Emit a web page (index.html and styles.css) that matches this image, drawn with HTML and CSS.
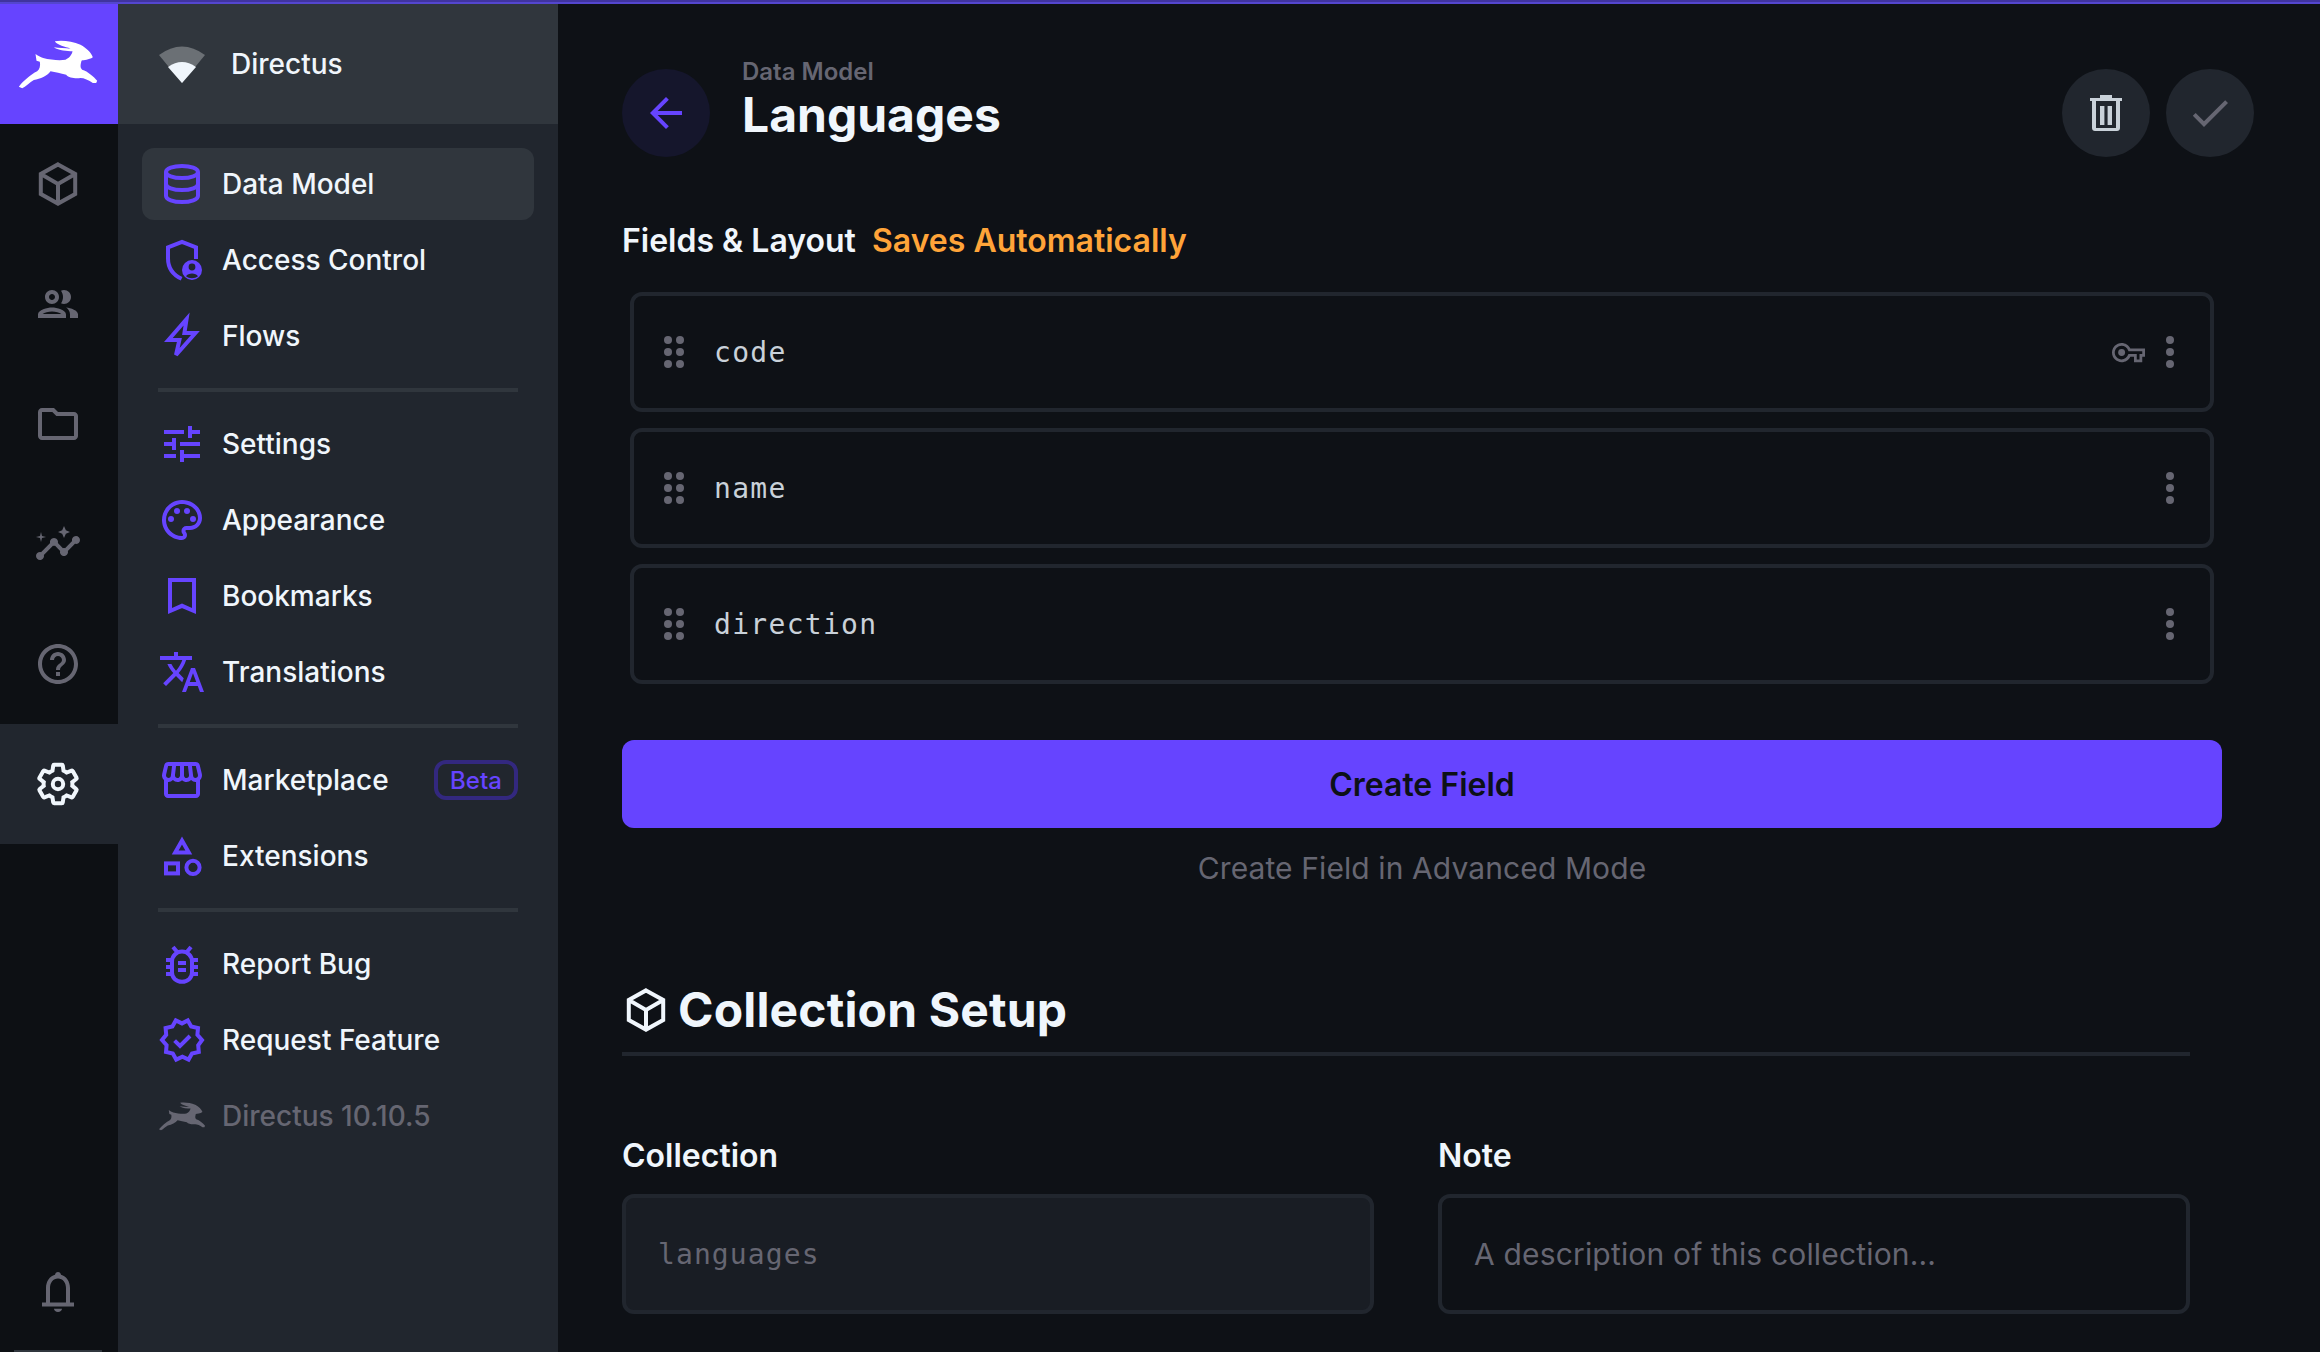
FILE: index.html
```html
<!DOCTYPE html>
<html lang="en">
<head>
    <meta charset="UTF-8">
    <title>Languages | Directus</title>
    <link rel="stylesheet" href="styles.css">
</head>
<body>
    <svg class="sprite" xmlns="http://www.w3.org/2000/svg">
        <symbol id="i-hare" viewBox="50 115 245 150"><path d="M55 258C70 240 90 222 110 212C118 205 120 195 118 183L108 180L105 160C112 165 120 170 128 172C150 178 180 180 195 177C208 172 215 160 216 152C200 152 175 150 160 140C175 142 195 143 210 144C195 138 170 134 163 122C185 118 215 122 240 132C258 142 272 155 277 170C265 178 250 178 243 180C240 192 238 200 245 207C262 212 280 228 290 240L287 247L277 247C265 238 250 232 240 232C225 234 205 232 197 222C180 218 165 215 150 212C140 226 120 235 100 238C88 245 75 258 65 263Z"/></symbol>
        <symbol id="i-box" viewBox="0 0 24 24"><path class="line" d="M12 2.2 20.6 7v10L12 21.8 3.4 17V7zM3.4 7 12 12l8.6-5M12 12v9.8"/></symbol>
        <symbol id="i-people" viewBox="0 0 24 24"><path d="M9 13.75c-2.34 0-7 1.17-7 3.5V19h14v-1.75c0-2.33-4.66-3.5-7-3.5zM4.34 17c.84-.58 2.87-1.25 4.66-1.25s3.82.67 4.66 1.25H4.34zM9 12c1.93 0 3.5-1.57 3.5-3.5S10.93 5 9 5 5.5 6.57 5.5 8.5 7.07 12 9 12zm0-5c.83 0 1.5.67 1.5 1.5S9.83 10 9 10s-1.5-.67-1.5-1.5S8.17 7 9 7zm7.04 6.81c1.16.84 1.96 1.96 1.96 3.44V19h4v-1.75c0-2.02-3.5-3.17-5.96-3.44zM15 12c1.93 0 3.5-1.57 3.5-3.5S16.93 5 15 5c-.54 0-1.04.13-1.5.35.63.89 1 1.98 1 3.15s-.37 2.26-1 3.15c.46.22.96.35 1.5.35z"/></symbol>
        <symbol id="i-folder" viewBox="0 0 24 24"><path d="M9.17 6l2 2H20v10H4V6h5.17M10 4H4c-1.1 0-1.99.9-1.99 2L2 18c0 1.1.9 2 2 2h16c1.1 0 2-.9 2-2V8c0-1.1-.9-2-2-2h-8l-2-2z"/></symbol>
        <symbol id="i-insights" viewBox="0 0 24 24"><path d="M21 8c-1.45 0-2.26 1.44-1.93 2.51l-3.55 3.56c-.3-.09-.74-.09-1.04 0l-2.55-2.55C12.27 10.45 11.46 9 10 9c-1.45 0-2.27 1.44-1.93 2.52l-4.56 4.55C2.44 15.74 1 16.55 1 18c0 1.1.9 2 2 2 1.45 0 2.26-1.44 1.93-2.51l4.55-4.56c.3.09.74.09 1.04 0l2.55 2.55C12.73 16.55 13.54 18 15 18c1.45 0 2.27-1.44 1.93-2.52l3.56-3.55c1.07.33 2.51-.48 2.51-1.93 0-1.1-.9-2-2-2z"/><path d="M15 9l.94-2.07L18 6l-2.06-.93L15 3l-.92 2.07L12 6l2.08.93zM3.5 11L4 9l2-.5L4 8l-.5-2L3 8l-2 .5L3 9z"/></symbol>
        <symbol id="i-help" viewBox="0 0 24 24"><path d="M11 18h2v-2h-2v2zm1-16C6.48 2 2 6.48 2 12s4.48 10 10 10 10-4.48 10-10S17.52 2 12 2zm0 18c-4.41 0-8-3.59-8-8s3.59-8 8-8 8 3.59 8 8-3.59 8-8 8zm0-14c-2.21 0-4 1.79-4 4h2c0-1.1.9-2 2-2s2 .9 2 2c0 2-3 1.75-3 5h2c0-2.25 3-2.5 3-5 0-2.21-1.79-4-4-4z"/></symbol>
        <symbol id="i-gear" viewBox="0 0 24 24"><path class="line" d="M19.14 12.94c.04-.3.06-.61.06-.94 0-.32-.02-.64-.07-.94l2.03-1.58c.18-.14.23-.41.12-.61l-1.92-3.32c-.12-.22-.37-.29-.59-.22l-2.39.96c-.5-.38-1.03-.7-1.62-.94l-.36-2.54c-.04-.24-.24-.41-.48-.41h-3.84c-.24 0-.43.17-.47.41l-.36 2.54c-.59.24-1.13.57-1.62.94l-2.39-.96c-.22-.08-.47 0-.59.22L2.74 8.87c-.12.21-.08.47.12.61l2.03 1.58c-.05.3-.09.63-.09.94s.02.64.07.94l-2.03 1.58c-.18.14-.23.41-.12.61l1.92 3.32c.12.22.37.29.59.22l2.39-.96c.5.38 1.03.7 1.62.94l.36 2.54c.05.24.24.41.48.41h3.84c.24 0 .44-.17.47-.41l.36-2.54c.59-.24 1.13-.56 1.62-.94l2.39.96c.22.08.47 0 .59-.22l1.92-3.32c.12-.22.07-.47-.12-.61l-2.01-1.58z"/><circle class="line" cx="12" cy="12" r="2.6"/></symbol>
        <symbol id="i-bell" viewBox="0 0 24 24"><path d="M4 17.2h16v2H4zM10 20.4h4c0 1-.9 1.6-2 1.6s-2-.6-2-1.6zM12 2c.8 0 1.4.6 1.5 1.4C16.200 4.100 18 6.800 18 10v7.500h-2V10c0-2.700-1.600-4.800-4-4.800S8 7.300 8 10v7.500H6V10c0-3.200 1.800-5.900 4.500-6.600C10.600 2.600 11.200 2 12 2z"/></symbol>
        <symbol id="i-database" viewBox="0 0 24 24"><path class="line" d="M4 6c0-1.700 3.600-3 8-3s8 1.300 8 3-3.600 3-8 3-8-1.300-8-3zM4 6v12c0 1.700 3.600 3 8 3s8-1.300 8-3V6M4 12c0 1.700 3.600 3 8 3s8-1.300 8-3"/></symbol>
        <symbol id="i-shield" viewBox="0 0 24 24"><path class="line" d="M19 11.500V5.700L12 3 5 5.700v5.500c0 4.500 2.600 8.200 6.800 10.200"/><path fill-rule="evenodd" d="M17 12a5 5 0 1 1 0 10 5 5 0 0 1 0-10zm0 1.800a1.700 1.700 0 1 0 0 3.400 1.700 1.700 0 0 0 0-3.400zm-3 6.300c.7.600 1.800 1 3 1s2.300-.4 3-1c-.6-.8-1.700-1.300-3-1.300s-2.400.5-3 1.300z"/></symbol>
        <symbol id="i-bolt" viewBox="0 0 24 24"><path class="line" d="M14.300 3.500 5.200 14h5.500L9 21.500 18.700 10.500H13.200z"/></symbol>
        <symbol id="i-tune" viewBox="0 0 24 24"><path d="M3 17v2h6v-2H3zM3 5v2h10V5H3zm10 16v-2h8v-2h-8v-2h-2v6h2zM7 9v2H3v2h4v2h2V9H7zm14 4v-2H11v2h10zm-6-4h2V7h4V5h-4V3h-2v6z"/></symbol>
        <symbol id="i-palette" viewBox="0 0 24 24"><path d="M12 22C6.490 22 2 17.510 2 12S6.490 2 12 2s10 4.040 10 9c0 3.310-2.690 6-6 6h-1.770c-.28 0-.5.220-.5.500 0 .120.050.230.130.330.410.470.640 1.060.640 1.670A2.500 2.500 0 0 1 12 22zm0-18c-4.410 0-8 3.590-8 8s3.590 8 8 8c.280 0 .500-.220.500-.500a.540.540 0 0 0-.140-.350c-.410-.460-.630-1.050-.630-1.650a2.500 2.500 0 0 1 2.500-2.500H16c2.210 0 4-1.790 4-4 0-3.860-3.590-7-8-7z"/><circle cx="6.500" cy="11.500" r="1.500"/><circle cx="9.500" cy="7.500" r="1.500"/><circle cx="14.500" cy="7.500" r="1.500"/><circle cx="17.500" cy="11.500" r="1.500"/></symbol>
        <symbol id="i-bookmark" viewBox="0 0 24 24"><path class="line" d="M6 4h12v15.500l-6-2.600-6 2.600z"/></symbol>
        <symbol id="i-translate" viewBox="0 0 24 24"><path d="M12.870 15.070l-2.540-2.510.030-.030c1.740-1.940 2.980-4.170 3.710-6.530H17V4h-7V2H8v2H1v1.990h11.170C11.500 7.920 10.440 9.750 9 11.350 8.070 10.320 7.300 9.190 6.690 8h-2c.73 1.630 1.730 3.170 2.980 4.560l-5.090 5.020L4 19l5-5 3.110 3.110.76-2.040zM18.500 10h-2L12 22h2l1.120-3h4.750L21 22h2l-4.500-12zm-2.620 7l1.620-4.330L19.120 17h-3.240z"/></symbol>
        <symbol id="i-store" viewBox="0 0 24 24"><path d="M21.900 8.890l-1.050-4.370c-.22-.9-1-1.520-1.910-1.520H5.050c-.9 0-1.690.63-1.900 1.520L2.100 8.890c-.24 1.020-.02 2.060.62 2.880.08.110.19.190.28.290V19c0 1.100.9 2 2 2h14c1.100 0 2-.9 2-2v-6.940c.09-.09.2-.18.28-.28.64-.82.87-1.870.62-2.890zm-2.990-3.900l1.050 4.370c.1.420.01.840-.25 1.170-.14.180-.44.470-.94.470-.61 0-1.140-.49-1.210-1.140L16.980 5l1.930-.01zM13 5h1.960l.54 4.520c.05.39-.07.78-.33 1.070-.22.26-.54.41-.95.41-.67 0-1.220-.59-1.220-1.310V5zM8.490 9.520L9.040 5H11v4.690c0 .72-.55 1.310-1.290 1.310-.34 0-.65-.15-.89-.41-.25-.29-.37-.68-.33-1.070zm-4.450-.16L5.050 5h1.970l-.58 4.860c-.08.65-.6 1.140-1.210 1.140-.49 0-.8-.29-.93-.47-.27-.32-.36-.75-.26-1.170zM5 19v-6.030c.08.010.15.030.23.030.87 0 1.660-.36 2.240-.95.6.6 1.400.95 2.310.95.87 0 1.650-.36 2.230-.93.59.57 1.390.93 2.290.93.84 0 1.640-.35 2.240-.95.58.59 1.370.95 2.240.95.08 0 .15-.02.23-.03V19H5z"/></symbol>
        <symbol id="i-shapes" viewBox="0 0 24 24"><path class="line" d="M12 4.300 15.400 10.200H8.600z"/><rect class="line" x="4" y="15.700" width="6" height="5"/><circle class="line" cx="17.500" cy="17.700" r="3.300"/></symbol>
        <symbol id="i-bug" viewBox="0 0 24 24"><path class="line" d="M12 5.800c2.800 0 5 2.200 5 5v5.400c0 2.800-2.200 4.700-5 4.700s-5-1.900-5-4.700v-5.400c0-2.800 2.200-5 5-5z"/><path class="line" d="M7.500 3.500 9.800 6.300M16.500 3.500 14.200 6.300M4 10h3M4 13.500h3M4 17h3M17 10h3M17 13.500h3M17 17h3M10 11.500h4M10 15h4"/></symbol>
        <symbol id="i-badge" viewBox="0 0 24 24"><path class="line" d="M22 12l-2.300-2.600.3-3.400-3.400-.8-1.700-3L12 3.700 8.900 2.200l-1.700 3-3.400.8.300 3.400L2 12l2.300 2.600-.3 3.400 3.400.8 1.700 3 3.100-1.500 3.100 1.500 1.700-3 3.400-.8-.3-3.400z"/><path class="line" d="M8.300 12.300l2.700 2.700 5-5"/></symbol>
        <symbol id="i-arrow" viewBox="0 0 24 24"><path d="M20 11H7.830l5.590-5.590L12 4l-8 8 8 8 1.410-1.410L7.830 13H20v-2z"/></symbol>
        <symbol id="i-trash" viewBox="0 0 24 24"><path d="M9 3h6v1.500h5V6H4V4.500h5zM5 6h2v13.500h10V6h2v13.500c0 .9-.6 1.500-1.500 1.500h-11C5.600 21 5 20.400 5 19.500zM9 8.500h2.200v9.500H9zM12.800 8.500H15v9.500h-2.200z"/></symbol>
        <symbol id="i-check" viewBox="0 0 24 24"><path d="M9 16.170 4.830 12l-1.420 1.410L9 19 21 7l-1.410-1.410z"/></symbol>
        <symbol id="i-key" viewBox="0 0 24 24"><path d="M22 19h-6v-4h-2.680c-1.140 2.420-3.620 4-6.320 4-3.860 0-7-3.140-7-7s3.140-7 7-7c2.700 0 5.170 1.580 6.320 4H24v6h-2v4zm-4-2h2v-4h2v-2H11.940l-.23-.67C11.010 8.340 9.110 7 7 7c-2.760 0-5 2.240-5 5s2.240 5 5 5c2.110 0 4.010-1.340 4.710-3.330l.23-.67H18v4z"/><circle cx="7" cy="12" r="2.500"/></symbol>
        <symbol id="i-drag" viewBox="0 0 24 32"><circle cx="6" cy="4" r="4"/><circle cx="18" cy="4" r="4"/><circle cx="6" cy="16" r="4"/><circle cx="18" cy="16" r="4"/><circle cx="6" cy="28" r="4"/><circle cx="18" cy="28" r="4"/></symbol>
        <symbol id="i-more" viewBox="0 0 8 32"><circle cx="4" cy="4" r="4"/><circle cx="4" cy="16" r="4"/><circle cx="4" cy="28" r="4"/></symbol>
    </svg>

    <div class="top-strip"></div>

    <div class="app">
        <aside class="modules">
            <a class="logo"><svg class="hare"><use href="#i-hare"/></svg></a>
            <a class="module"><svg class="icon"><use href="#i-box"/></svg></a>
            <a class="module"><svg class="icon"><use href="#i-people"/></svg></a>
            <a class="module"><svg class="icon"><use href="#i-folder"/></svg></a>
            <a class="module"><svg class="icon"><use href="#i-insights"/></svg></a>
            <a class="module"><svg class="icon"><use href="#i-help"/></svg></a>
            <a class="module active"><svg class="icon"><use href="#i-gear"/></svg></a>
            <a class="module bell"><svg class="icon"><use href="#i-bell"/></svg></a>
            <div class="avatar-edge"></div>
        </aside>

        <nav class="sidebar">
            <div class="project">
                <svg class="project-logo" viewBox="159 44 46 40">
                    <path class="arc" d="M159 55Q182 38 205 55L182 83Z"/>
                    <path class="fan" d="M168 67Q182 57 196 67L182 83Z"/>
                </svg>
                <span>Directus</span>
            </div>
            <div class="nav-list">
                <a class="nav-item active"><svg class="icon"><use href="#i-database"/></svg>Data Model</a>
                <a class="nav-item"><svg class="icon"><use href="#i-shield"/></svg>Access Control</a>
                <a class="nav-item"><svg class="icon"><use href="#i-bolt"/></svg>Flows</a>
                <div class="nav-divider"></div>
                <a class="nav-item"><svg class="icon"><use href="#i-tune"/></svg>Settings</a>
                <a class="nav-item"><svg class="icon"><use href="#i-palette"/></svg>Appearance</a>
                <a class="nav-item"><svg class="icon"><use href="#i-bookmark"/></svg>Bookmarks</a>
                <a class="nav-item"><svg class="icon"><use href="#i-translate"/></svg>Translations</a>
                <div class="nav-divider"></div>
                <a class="nav-item"><svg class="icon"><use href="#i-store"/></svg>Marketplace<span class="beta">Beta</span></a>
                <a class="nav-item"><svg class="icon"><use href="#i-shapes"/></svg>Extensions</a>
                <div class="nav-divider"></div>
                <a class="nav-item"><svg class="icon"><use href="#i-bug"/></svg>Report Bug</a>
                <a class="nav-item"><svg class="icon"><use href="#i-badge"/></svg>Request Feature</a>
                <a class="nav-item version"><svg class="hare-small"><use href="#i-hare"/></svg>Directus 10.10.5</a>
            </div>
        </nav>

        <main class="content">
            <header class="page-header">
                <a class="round-btn back"><svg class="icon"><use href="#i-arrow"/></svg></a>
                <div class="page-title">
                    <div class="crumb">Data Model</div>
                    <h1>Languages</h1>
                </div>
                <div class="actions">
                    <a class="round-btn trash"><svg class="icon"><use href="#i-trash"/></svg></a>
                    <a class="round-btn save"><svg class="icon"><use href="#i-check"/></svg></a>
                </div>
            </header>

            <div class="field-label first">Fields &amp; Layout <span class="warn">Saves Automatically</span></div>

            <div class="field-list">
                <div class="field-row">
                    <svg class="drag"><use href="#i-drag"/></svg>
                    <span class="field-name">code</span>
                    <svg class="key"><use href="#i-key"/></svg>
                    <svg class="more"><use href="#i-more"/></svg>
                </div>
                <div class="field-row">
                    <svg class="drag"><use href="#i-drag"/></svg>
                    <span class="field-name">name</span>
                    <svg class="more"><use href="#i-more"/></svg>
                </div>
                <div class="field-row">
                    <svg class="drag"><use href="#i-drag"/></svg>
                    <span class="field-name">direction</span>
                    <svg class="more"><use href="#i-more"/></svg>
                </div>
            </div>

            <button class="create-btn">Create Field</button>
            <div class="advanced">Create Field in Advanced Mode</div>

            <h2 class="section-title"><svg class="icon"><use href="#i-box"/></svg>Collection Setup</h2>

            <div class="form-grid">
                <div>
                    <div class="field-label">Collection</div>
                    <div class="input mono">languages</div>
                </div>
                <div>
                    <div class="field-label">Note</div>
                    <div class="input note">A description of this collection...</div>
                </div>
            </div>
        </main>
    </div>
</body>
</html>
```

FILE: styles.css
```css
* {
    box-sizing: border-box;
}
html, body {
    margin: 0;
    height: 100%;
    overflow: hidden;
}
body {
    background-color: #0e1116;
    color: #f0f6fc;
    font-family: Inter, "Noto Sans", sans-serif;
    font-size: 28px;
}
.sprite {
    display: none;
}
.line {
    fill: none;
    stroke: currentColor;
    stroke-width: 2;
}
.icon {
    width: 48px;
    height: 48px;
    flex: none;
    fill: currentColor;
}
.top-strip {
    height: 4px;
    background-color: #5446cf;
    border-top: 2px solid #40349f;
}
.app {
    display: flex;
    height: 1348px;
}

/* module bar */
.modules {
    position: relative;
    width: 118px;
    flex: none;
    display: flex;
    flex-direction: column;
    background-color: #0d1014;
    color: #666672;
}
.logo {
    height: 120px;
    padding-right: 3px;
    display: flex;
    align-items: center;
    justify-content: center;
    background-color: #6644ff;
}
.hare {
    width: 82px;
    height: 50px;
    fill: #fff;
}
.module {
    height: 120px;
    padding-right: 2px;
    display: flex;
    align-items: center;
    justify-content: center;
}
.module.active {
    background-color: #21262e;
    color: #f0f6fc;
}
.module.bell {
    margin-top: auto;
}
.avatar-edge {
    position: absolute;
    left: 14px;
    bottom: 0;
    width: 88px;
    height: 2px;
    background-color: #30363d;
}

/* sidebar */
.sidebar {
    width: 440px;
    flex: none;
    background-color: #21262e;
}
.project {
    height: 120px;
    display: flex;
    align-items: center;
    gap: 26px;
    padding-left: 41px;
    background-color: #30363d;
    font-weight: 500;
}
.project-logo {
    width: 46px;
    height: 40px;
    flex: none;
}
.arc {
    fill: #6b7075;
}
.fan {
    fill: #f0f6fc;
}
.nav-list {
    padding: 24px;
    display: flex;
    flex-direction: column;
    gap: 4px;
}
.nav-item {
    height: 72px;
    display: flex;
    align-items: center;
    gap: 16px;
    padding: 0 16px;
    border-radius: 12px;
    color: #f0f6fc;
    font-weight: 500;
}
.nav-item .icon {
    color: #6644ff;
}
.nav-item.active {
    background-color: #30363d;
}
.nav-divider {
    height: 4px;
    margin: 12px 16px;
    background-color: #30363d;
}
.beta {
    margin-left: auto;
    width: 84px;
    height: 40px;
    display: flex;
    align-items: center;
    justify-content: center;
    border: 4px solid #33287f;
    border-radius: 12px;
    color: #6644ff;
    font-size: 24px;
    font-weight: 500;
}
.version {
    color: #666672;
}
.hare-small {
    width: 48px;
    height: 30px;
    flex: none;
    fill: #666672;
}

/* main content */
.content {
    flex: 1;
    padding: 65px 0 0 64px;
}
.page-header {
    display: flex;
    align-items: center;
    height: 88px;
    padding-right: 66px;
}
.round-btn {
    width: 88px;
    height: 88px;
    flex: none;
    display: flex;
    align-items: center;
    justify-content: center;
    border-radius: 50%;
    background-color: #21262e;
}
.round-btn.back {
    background-color: #15162c;
    color: #6644ff;
}
.round-btn.trash {
    color: #c9d1d9;
}
.round-btn.save {
    color: #666672;
}
.page-title {
    margin-left: 32px;
    padding-bottom: 26px;
}
.crumb {
    color: #666672;
    font-size: 24px;
    font-weight: 600;
    line-height: 30px;
}
h1 {
    margin: 0;
    font-size: 48px;
    font-weight: 700;
    line-height: 56px;
}
.actions {
    margin-left: auto;
    display: flex;
    gap: 16px;
}
.field-label {
    font-size: 32px;
    font-weight: 600;
    line-height: 40px;
}
.field-label.first {
    margin-top: 64px;
}
.warn {
    margin-left: 8px;
    color: #ffa439;
}
.field-list {
    width: 1584px;
    margin: 31px 0 0 8px;
    display: flex;
    flex-direction: column;
    gap: 16px;
}
.field-row {
    height: 120px;
    display: flex;
    align-items: center;
    padding: 0 36px 0 28px;
    border: 4px solid #21262e;
    border-radius: 12px;
}
.drag {
    width: 24px;
    height: 32px;
    flex: none;
    fill: #666672;
}
.field-name {
    margin-left: 28px;
    color: #c9d1d9;
    font-family: "DejaVu Sans Mono", "Liberation Mono", monospace;
    font-size: 28px;
    letter-spacing: 1.3px;
}
.key {
    width: 33px;
    height: 33px;
    flex: none;
    margin-left: auto;
    fill: #666672;
}
.more {
    width: 8px;
    height: 32px;
    flex: none;
    margin-left: 21px;
    fill: #666672;
}
.field-name + .more {
    margin-left: auto;
}
.create-btn {
    display: block;
    width: 1600px;
    height: 88px;
    margin-top: 56px;
    padding: 0;
    border: 0;
    border-radius: 12px;
    background-color: #6644ff;
    color: #0d1117;
    font-family: inherit;
    font-size: 32px;
    font-weight: 600;
}
.advanced {
    width: 1600px;
    margin-top: 20px;
    color: #666672;
    font-size: 30px;
    letter-spacing: 0.1px;
    line-height: 40px;
    text-align: center;
}
.section-title {
    width: 1568px;
    margin: 92px 0 0;
    padding-bottom: 12px;
    display: flex;
    align-items: center;
    gap: 8px;
    border-bottom: 4px solid #21262e;
    font-size: 48px;
    font-weight: 700;
    letter-spacing: 0.15px;
    line-height: 60px;
}
.form-grid {
    width: 1568px;
    margin-top: 80px;
    display: grid;
    grid-template-columns: 1fr 1fr;
    gap: 64px;
}
.input {
    height: 120px;
    margin-top: 18px;
    padding: 0 32px;
    display: flex;
    align-items: center;
    border: 4px solid #21262e;
    border-radius: 12px;
    color: #666672;
    font-size: 30px;
    letter-spacing: 0.17px;
}
.input.mono {
    background-color: #191d24;
    font-family: "DejaVu Sans Mono", "Liberation Mono", monospace;
    font-size: 28px;
    letter-spacing: 1.1px;
}
```
